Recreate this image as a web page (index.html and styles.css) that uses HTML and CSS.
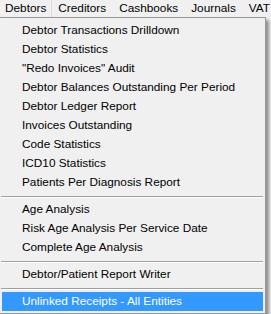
FILE: index.html
```html
<!DOCTYPE html>
<html lang="en">
<head>
  <meta charset="UTF-8" />
  <title>Debtors Menu</title>
  <link rel="stylesheet" href="styles.css">
</head>
<body>
  <div class="menubar">
    <span class="top-item open">Debtors</span>
    <span class="top-item">Creditors</span>
    <span class="top-item">Cashbooks</span>
    <span class="top-item">Journals</span>
    <span class="top-item">VAT</span>
  </div>

  <div class="dropdown">
    <div class="item">Debtor Transactions Drilldown</div>
    <div class="item">Debtor Statistics</div>
    <div class="item">"Redo Invoices" Audit</div>
    <div class="item">Debtor Balances Outstanding Per Period</div>
    <div class="item">Debtor Ledger Report</div>
    <div class="item">Invoices Outstanding</div>
    <div class="item">Code Statistics</div>
    <div class="item">ICD10 Statistics</div>
    <div class="item">Patients Per Diagnosis Report</div>
    <div class="sep"></div>
    <div class="item">Age Analysis</div>
    <div class="item">Risk Age Analysis Per Service Date</div>
    <div class="item">Complete Age Analysis</div>
    <div class="sep"></div>
    <div class="item">Debtor/Patient Report Writer</div>
    <div class="sep"></div>
    <div class="item selected">Unlinked Receipts - All Entities</div>
  </div>
</body>
</html>
```

FILE: styles.css
```css
body {
  margin: 0;
  background: #f0f0f0;
  font-family: "Liberation Sans", Arial, sans-serif;
  font-size: 11.8px;
  color: #000;
  overflow: hidden;
}
.menubar {
  display: flex;
  height: 17px;
  background: #f0f0f0;
  white-space: nowrap;
}
.top-item {
  padding: 0 7px 0 6px;
  line-height: 17px;
}
.top-item.open {
  padding-left: 5px;
  padding-right: 5px;
  border-right: 1px solid #dcdcdc;
}
.dropdown {
  width: 267px;
  box-sizing: border-box;
  margin-left: -1px;
  padding: 3px 2px 2px 2px;
  background: #f0f0f0;
  border: 1px solid #979797;
  box-shadow: 3px 3px 3px rgba(0, 0, 0, 0.4);
}
.item {
  height: 19px;
  line-height: 19px;
  padding-left: 20px;
  white-space: nowrap;
}
.item.selected {
  background: #3399ff;
  color: #fff;
}
.sep {
  height: 0;
  margin: 4px 0 2px -1px;
  border-top: 1px solid #a0a0a0;
  border-bottom: 1px solid #fff;
}
```
